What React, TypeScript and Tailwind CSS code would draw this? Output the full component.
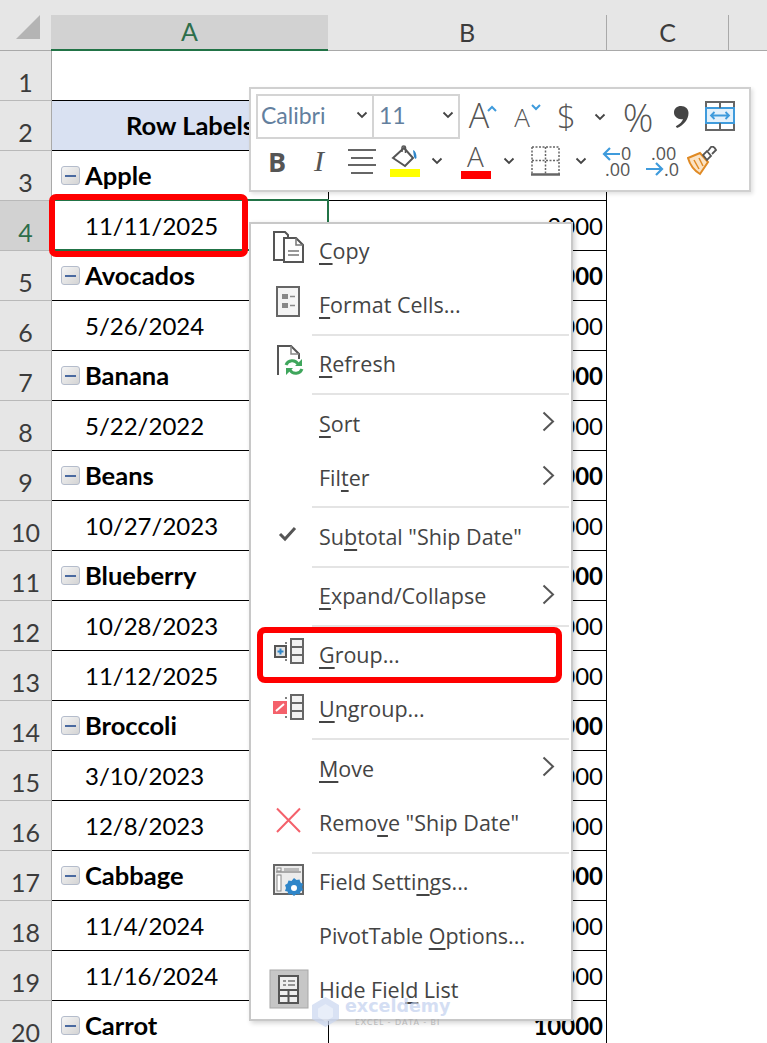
import React from "react";

const sheetFont = "[font-family:Lato,sans-serif]";
const uiFont = "[font-family:'Open_Sans',sans-serif]";

type Row = { n: number; label?: string; value?: string; group?: boolean };

const rows: Row[] = [
  { n: 1 },
  { n: 2, label: "Row Labels" },
  { n: 3, label: "Apple", value: "10000", group: true },
  { n: 4, label: "11/11/2025", value: "3000" },
  { n: 5, label: "Avocados", value: "10000", group: true },
  { n: 6, label: "5/26/2024", value: "10000" },
  { n: 7, label: "Banana", value: "10000", group: true },
  { n: 8, label: "5/22/2022", value: "10000" },
  { n: 9, label: "Beans", value: "10000", group: true },
  { n: 10, label: "10/27/2023", value: "10000" },
  { n: 11, label: "Blueberry", value: "10000", group: true },
  { n: 12, label: "10/28/2023", value: "5000" },
  { n: 13, label: "11/12/2025", value: "5000" },
  { n: 14, label: "Broccoli", value: "10000", group: true },
  { n: 15, label: "3/10/2023", value: "5000" },
  { n: 16, label: "12/8/2023", value: "5000" },
  { n: 17, label: "Cabbage", value: "10000", group: true },
  { n: 18, label: "11/4/2024", value: "5000" },
  { n: 19, label: "11/16/2024", value: "5000" },
  { n: 20, label: "Carrot", value: "10000", group: true },
];

function MinusBox() {
  return (
    <span className="flex h-[19px] w-[19px] shrink-0 items-center justify-center rounded-[3px] border border-[#b4bccb] bg-gradient-to-br from-[#f6f6f6] to-[#d4d4d4]">
      <span className="h-[2px] w-[11px] bg-[#4a6aa0]" />
    </span>
  );
}

function SheetRow({ row }: { row: Row }) {
  const selected = row.n === 4;
  return (
    <div className="flex h-[50px]">
      <div
        className={`flex w-[52px] shrink-0 items-end justify-center border-r border-b border-r-[#a9a9a9] border-b-[#b9b9b9] text-[25px] leading-[36px] ${
          selected ? "bg-[#d2d2d2] text-[#2d6e4b]" : "bg-[#e6e6e6] text-[#3c3c3c]"
        }`}
      >
        {row.n}
      </div>
      {row.n === 1 ? (
        <>
          <div className="w-[276px] border-b border-black" />
          <div className="w-[279px] border-b border-black" />
        </>
      ) : (
        <>
          <div
            className={`flex w-[276px] items-center border-b border-black text-black ${
              row.n === 2
                ? "justify-center bg-[#d9e1f2] text-[25.5px] font-bold"
                : row.group
                  ? "gap-[5px] pl-[9px] text-[25.5px] font-bold"
                  : "pl-[33px] text-[24px]"
            }`}
          >
            {row.group && <MinusBox />}
            {row.label}
          </div>
          <div
            className={`flex w-[279px] items-center justify-end border-x border-b border-black pr-[3px] text-[24px] text-black ${
              row.n === 2 ? "bg-[#d9e1f2]" : ""
            } ${row.group ? "font-bold" : ""}`}
          >
            {row.value}
          </div>
        </>
      )}
    </div>
  );
}

function Chevron() {
  return (
    <svg width="12" height="8" viewBox="0 0 12 8" fill="none" stroke="#444" strokeWidth="1.8">
      <path d="M1.5 1.5 6 6l4.5-4.5" />
    </svg>
  );
}

function Slot({ w, children }: { w: string; children?: React.ReactNode }) {
  return <div className={`flex shrink-0 items-center justify-center ${w}`}>{children}</div>;
}

function Toolbar() {
  return (
    <div
      className={`absolute left-[249px] top-[87px] h-[105px] w-[502px] border-2 border-[#d0d0d0] bg-white pt-[5px] text-[#555] shadow-[2px_2px_4px_rgba(0,0,0,0.12)] ${uiFont}`}
    >
      <div className="flex h-[45px] pl-[5px]">
        <div className="flex h-[45px] w-[118px] items-center justify-between border-2 border-[#d4d4d4] pb-[3px] pl-[3px] pr-[4px]">
          <span className={`text-[23px] text-[#637f9e] ${sheetFont}`}>Calibri</span>
          <Chevron />
        </div>
        <div className="flex h-[45px] w-[86px] items-center justify-between border-2 border-l-0 border-[#d4d4d4] pb-[3px] pl-[5px] pr-[4px]">
          <span className={`text-[23px] text-[#637f9e] ${sheetFont}`}>11</span>
          <Chevron />
        </div>
        <Slot w="w-[46px]">
          <span className="-mt-[4px] text-[34px] font-light leading-none">A</span>
          <svg width="10" height="7" viewBox="0 0 10 7" fill="none" stroke="#3f9bdc" strokeWidth="2" className="-ml-[2px] -mt-[16px]">
            <path d="M1 6l4-4 4 4" />
          </svg>
        </Slot>
        <Slot w="w-[43px]">
          <span className="mt-[1px] text-[26px] font-light leading-none">A</span>
          <svg width="10" height="7" viewBox="0 0 10 7" fill="none" stroke="#3f9bdc" strokeWidth="2" className="ml-[1px] -mt-[18px]">
            <path d="M1 1l4 4 4-4" />
          </svg>
        </Slot>
        <Slot w="w-[35px]">
          <span className="text-[33px] font-light leading-none">$</span>
        </Slot>
        <Slot w="w-[32px]">
          <Chevron />
        </Slot>
        <Slot w="w-[45px]">
          <span className="-ml-[1px] text-[38px] font-light leading-none">%</span>
        </Slot>
        <Slot w="w-[39px]">
          <svg width="16" height="24" viewBox="0 0 16 24" fill="#444">
            <path d="M8 1c4.500 0 7.500 3 7.500 7 0 6.500-5 12.500-11.500 15l-1.200-1.700C7 19 9.500 16.500 10 14 5.500 15 1 12 1 7.500 1 3.500 4 1 8 1z" />
          </svg>
        </Slot>
        <Slot w="w-[42px]">
          <svg width="30" height="30" viewBox="0 0 30 30" fill="none" className="-ml-[3px] -mt-[2px]">
            <rect x="1" y="1" width="28" height="28" fill="#fff" stroke="#666" strokeWidth="2" />
            <rect x="1" y="7" width="28" height="15" fill="#e4f1fb" stroke="#3f9bdc" strokeWidth="2" />
            <path d="M15 1v6M15 22v7" stroke="#666" strokeWidth="2" />
            <path d="M6 14.500h18M9.500 11 6 14.500 9.500 18M20.500 11l3.500 3.500-3.500 3.500" stroke="#3f9bdc" strokeWidth="1.800" />
          </svg>
        </Slot>
      </div>
      <div className="flex h-[44px]">
        <Slot w="w-[52px]">
          <span className="text-[27px] font-bold leading-none">B</span>
        </Slot>
        <Slot w="w-[32px]">
          <span className="[font-family:'Liberation_Serif',serif] text-[30px] italic leading-none">I</span>
        </Slot>
        <Slot w="w-[54px]">
          <svg width="28" height="26" viewBox="0 0 28 26" fill="none" stroke="#666" strokeWidth="2">
            <path d="M0 2h28M3 10h22M0 17h28M3 25h22" />
          </svg>
        </Slot>
        <Slot w="w-[31px]">
          <svg width="31" height="32" viewBox="0 0 31 32" fill="none">
            <path d="M4 13 15 3l9 10-8 8z" fill="#fff" stroke="#555" strokeWidth="2" />
            <path d="M13 7V2.500c0-2 3.500-2 3.500 0V8" stroke="#555" strokeWidth="1.500" />
            <path d="M24 5c2.500 1 3.500 3.500 3.500 8l-1 1-1.500-2z" fill="#2f86c9" />
            <rect x="1" y="24" width="30" height="8" fill="#ffff00" />
          </svg>
        </Slot>
        <Slot w="w-[34px]">
          <Chevron />
        </Slot>
        <Slot w="w-[43px]">
          <div className="flex flex-col items-center">
            <span className="text-[28px] font-light leading-[26px]">A</span>
            <span className="mt-[2px] h-[8px] w-[30px] bg-[#ff0000]" />
          </div>
        </Slot>
        <Slot w="w-[23px]">
          <Chevron />
        </Slot>
        <Slot w="w-[51px]">
          <svg width="29" height="30" viewBox="0 0 29 30" fill="none" stroke="#666" strokeWidth="1.500">
            <path d="M1 1h27v27M1 1v27M14.500 1v27M1 14.500h27" strokeDasharray="2 1.500" />
            <path d="M0 28.500h29" strokeWidth="2.500" />
          </svg>
        </Slot>
        <Slot w="w-[19px]">
          <Chevron />
        </Slot>
        <Slot w="w-[55px]">
          <svg width="31" height="32" viewBox="0 0 31 32" fill="none" className="overflow-visible">
            <path d="M18 9H3M8 3 2 9l6 6" stroke="#3f9bdc" strokeWidth="2.200" />
            <text x="19" y="15" fontSize="18" fill="#555">0</text>
            <text x="3" y="31" fontSize="18" fill="#555">.00</text>
          </svg>
        </Slot>
        <Slot w="w-[30px]">
          <svg width="31" height="32" viewBox="0 0 31 32" fill="none" className="overflow-visible">
            <text x="6" y="15" fontSize="18" fill="#555">.00</text>
            <text x="19" y="31" fontSize="18" fill="#555">.0</text>
            <path d="M1 24h15M11 18l6 6-6 6" stroke="#3f9bdc" strokeWidth="2.200" />
          </svg>
        </Slot>
        <Slot w="w-[55px]">
          <svg width="31" height="30" viewBox="0 0 31 30" fill="none">
            <path d="M1 12 13 7l8 9-8 12C8 25 3 19 1 12z" fill="#fbe3c4" stroke="#e08a24" strokeWidth="2" />
            <path d="M7 14l5 9M12 12l4 8" stroke="#e08a24" strokeWidth="1.500" />
            <path d="M16 9l4 5 4-4-4-5z" fill="#fff" stroke="#555" strokeWidth="1.800" />
            <path d="M21 5l3-4c2-1 4 1 5 3l-4 4" fill="#fff" stroke="#555" strokeWidth="1.800" />
          </svg>
        </Slot>
      </div>
    </div>
  );
}

function Item({
  icon,
  arrow,
  children,
}: {
  icon?: React.ReactNode;
  arrow?: boolean;
  children: React.ReactNode;
}) {
  return (
    <div className="flex h-[54.2px] items-center">
      <div className="flex w-[68px] shrink-0 pl-[22px]">{icon}</div>
      <div className="flex-1 whitespace-nowrap">{children}</div>
      {arrow && (
        <svg width="13" height="21" viewBox="0 0 13 21" fill="none" stroke="#555" strokeWidth="2" className="mr-[16px] -mt-[4px]">
          <path d="M1.500 1.500 11 10.500 1.500 19.500" />
        </svg>
      )}
    </div>
  );
}

function Sep() {
  return (
    <div className="flex h-[5px] items-center pl-[61px] pr-[2px]">
      <div className="h-[2px] w-full bg-[#e4e4e4]" />
    </div>
  );
}

function U({ children }: { children: React.ReactNode }) {
  return <span className="underline decoration-[1.5px] underline-offset-[4px]">{children}</span>;
}

function Ic({ children }: { children: React.ReactNode }) {
  return (
    <svg width="32" height="32" viewBox="0 0 32 32" fill="none" className="overflow-visible">
      {children}
    </svg>
  );
}

function ContextMenu() {
  return (
    <div
      className={`absolute left-[249px] top-[222px] h-[799px] w-[324px] border-2 border-[#c8c8c8] bg-white text-[21.5px] text-[#444] shadow-[2px_2px_5px_rgba(0,0,0,0.18)] ${uiFont}`}
    >
      <Item
        icon={
          <Ic>
            <path d="M12 25H1V-3h11l3 3v3" stroke="#555" strokeWidth="2" />
            <path d="M11 3h12l7 7v17H11z" fill="#fff" stroke="#555" strokeWidth="2" />
            <path d="M23 3v7h7M15 16h11M15 20h11" stroke="#777" strokeWidth="1.500" />
          </Ic>
        }
      >
        <U>C</U>opy
      </Item>
      <Item
        icon={
          <Ic>
            <rect x="4" y="-2" width="22" height="29" fill="#f4f4f4" stroke="#666" strokeWidth="2" />
            <rect x="9" y="5" width="6" height="5" fill="#888" />
            <rect x="9" y="14" width="6" height="5" fill="#888" />
            <path d="M17 7.500h5M17 16.500h5" stroke="#888" strokeWidth="1.500" />
          </Ic>
        }
      >
        <U>F</U>ormat Cells...
      </Item>
      <Sep />
      <Item
        icon={
          <Ic>
            <path d="M5 27V-2h13l8 8v5" stroke="#555" strokeWidth="2" />
            <path d="M18-2v8h8" stroke="#888" strokeWidth="1.500" />
            <path d="M13 17c2-5 9-6 12-1M29 21c-2 5-9 6-12 1" stroke="#3fa65c" strokeWidth="3" />
            <path d="M29 11v7h-7zM13 27v-7h7z" fill="#3fa65c" />
          </Ic>
        }
      >
        <U>R</U>efresh
      </Item>
      <Sep />
      <Item arrow>
        <U>S</U>ort
      </Item>
      <Item arrow>
        Fil<U>t</U>er
      </Item>
      <Sep />
      <Item
        icon={
          <Ic>
            <path d="M7 13l5 5L22 7" stroke="#555" strokeWidth="3" />
          </Ic>
        }
      >
        Su<U>b</U>total "Ship Date"
      </Item>
      <Sep />
      <Item arrow>
        <U>E</U>xpand/Collapse
      </Item>
      <Sep />
      <Item
        icon={
          <Ic>
            <rect x="2" y="7" width="11" height="11" fill="#e2e2e2" stroke="#555" strokeWidth="2" />
            <path d="M7.500 9.500v6M4.500 12.500h6" stroke="#2f86c9" strokeWidth="2" />
            <path d="M14 4h-2M14 21h-2" stroke="#555" strokeWidth="1.500" />
            <rect x="18" y="0" width="12" height="24" fill="#f2f2f2" stroke="#666" strokeWidth="2" />
            <path d="M18 8h12M18 16h12" stroke="#666" strokeWidth="2" />
          </Ic>
        }
      >
        <U>G</U>roup...
      </Item>
      <Item
        icon={
          <Ic>
            <rect x="0" y="7" width="14" height="13" fill="#f4616b" />
            <path d="M3 17 11 10" stroke="#fff" strokeWidth="2" />
            <path d="M14 4h-2M14 23h-2" stroke="#555" strokeWidth="1.500" />
            <rect x="18" y="1" width="12" height="24" fill="#f2f2f2" stroke="#666" strokeWidth="2" />
            <path d="M18 9h12M18 17h12" stroke="#666" strokeWidth="2" />
          </Ic>
        }
      >
        <U>U</U>ngroup...
      </Item>
      <Sep />
      <Item arrow>
        <U>M</U>ove
      </Item>
      <Item
        icon={
          <Ic>
            <path d="M4 1.500 27 25M27 1.500 4 25" stroke="#f4616b" strokeWidth="2" />
          </Ic>
        }
      >
        Remo<U>v</U>e "Ship Date"
      </Item>
      <Sep />
      <Item
        icon={
          <Ic>
            <rect x="1" y="-1" width="29" height="29" fill="#ececec" stroke="#666" strokeWidth="2" />
            <path d="M3 6h25" stroke="#666" strokeWidth="1" />
            <rect x="4" y="2" width="4" height="3" fill="#fff" stroke="#888" />
            <rect x="11" y="2" width="15" height="3" fill="#bbb" />
            <rect x="4" y="9" width="4" height="16" fill="#fff" stroke="#888" />
            <path d="M21 12l2.500 2 3-.5 1 3 2.500 1.500-1 3 1 3-2.500 1.500-1 3-3-.5-2.500 2-2.500-2-3 .5-1-3L12 25l1-3-1-3 2.500-1.500 1-3 3 .5z" fill="#2f86c9" />
            <circle cx="21" cy="22" r="3" fill="#fff" />
          </Ic>
        }
      >
        Field Setti<U>n</U>gs...
      </Item>
      <Item>
        PivotTable <U>O</U>ptions...
      </Item>
      <Item
        icon={
          <Ic>
            <rect x="-3" y="-5" width="38" height="38" fill="#c6c6c6" stroke="#a8a8a8" strokeWidth="1" />
            <rect x="6" y="1" width="19" height="27" fill="#efefef" stroke="#555" strokeWidth="2" />
            <path d="M10 6h3M15 6h7M10 10h3M15 10h7" stroke="#777" strokeWidth="1.500" />
            <path d="M6 15h19M6 21h19M15.500 15v13" stroke="#555" strokeWidth="2" />
          </Ic>
        }
      >
        Hide Fiel<U>d</U> List
      </Item>
      {/* Group highlight */}
      <div className="absolute left-[6px] top-[403px] h-[56px] w-[305px] rounded-[8px] border-[6px] border-[#ff0000]" />
    </div>
  );
}

function Watermark() {
  return (
    <div className="pointer-events-none absolute left-[312px] top-[996px] flex items-center gap-[6px] opacity-70">
      <svg width="27" height="30" viewBox="0 0 27 30" fill="#c9d6f0">
        <path d="M13.500 0 27 8v14l-13.500 8L0 22V8z" />
        <path d="M13.500 7 21 11.500V20l-7.500 4.500L6 20v-8.500z" fill="#dfe7f7" />
      </svg>
      <div className="flex flex-col items-center">
        <span className="[font-family:'DejaVu_Sans',sans-serif] text-[17.500px] font-bold leading-[21px] text-[#c3d1ef]">
          exceldemy
        </span>
        <span className="text-[8px] font-semibold leading-[10px] tracking-[1.2px] text-[#a8a8a8]">
          EXCEL - DATA - BI
        </span>
      </div>
    </div>
  );
}

export default function App() {
  return (
    <div className={`relative h-[1043px] w-[767px] overflow-hidden bg-white ${sheetFont}`}>
      {/* Column headers */}
      <div className="flex h-[51px] items-end bg-[#e6e6e6] text-[25px] text-[#3c3c3c]">
        <div className="relative h-[36px] w-[51px] border-b border-[#a9a9a9]">
          <svg width="30" height="30" viewBox="0 0 30 30" className="absolute bottom-[5px] right-[5px]">
            <path d="M24 0v24H0z" fill="#b4b4b4" />
          </svg>
        </div>
        <div className="flex h-[36px] w-[277px] items-center justify-center border-b-2 border-[#217346] bg-[#d2d2d2] text-[#2d6e4b]">
          A
        </div>
        <div className="flex h-[36px] w-[279px] items-center justify-center border-b border-r border-[#a9a9a9]">B</div>
        <div className="flex h-[36px] w-[122px] items-center justify-center border-b border-r border-[#a9a9a9]">C</div>
        <div className="h-[36px] flex-1 border-b border-[#a9a9a9]" />
      </div>

      {rows.map((r) => (
        <SheetRow key={r.n} row={r} />
      ))}

      {/* Selected cell */}
      <div className="absolute left-[51px] top-[199px] h-[52px] w-[278px] border-2 border-[#217346]" />
      <div className="absolute left-[49px] top-[194px] h-[63px] w-[199px] rounded-[7px] border-[6px] border-[#ff0000]" />

      <Toolbar />
      <ContextMenu />
      <Watermark />
    </div>
  );
}
